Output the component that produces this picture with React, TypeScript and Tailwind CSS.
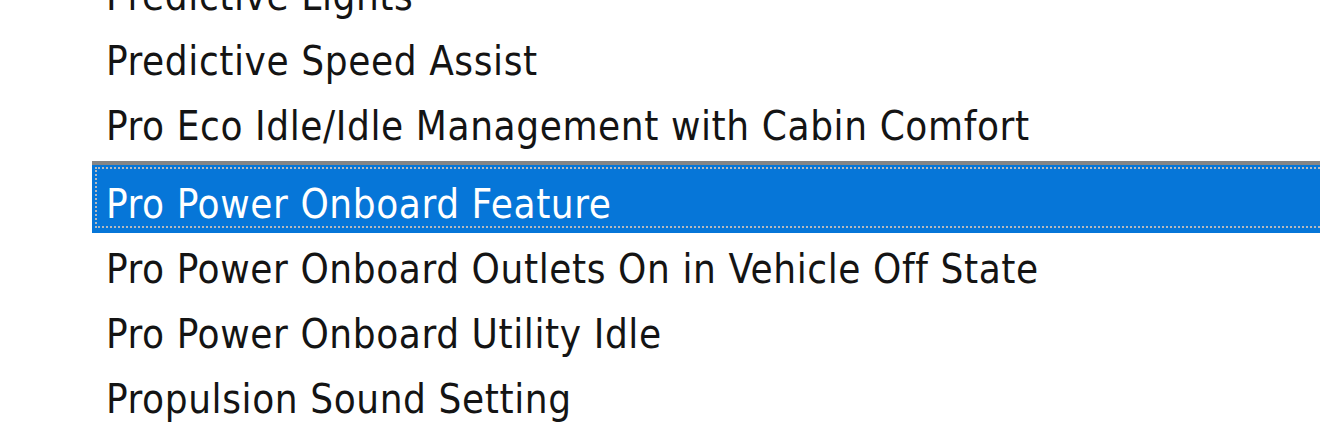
const items = [
  'Predictive Lights',
  'Predictive Speed Assist',
  'Pro Eco Idle/Idle Management with Cabin Comfort',
]

const after = [
  'Pro Power Onboard Outlets On in Vehicle Off State',
  'Pro Power Onboard Utility Idle',
  'Propulsion Sound Setting',
]

export default function App() {
  return (
    <div
      className="w-[1320px] h-[434px] overflow-hidden bg-white text-[40px] tracking-[0.6px] text-[#141414]"
      style={{ fontFamily: '"DejaVu Sans Condensed", "DejaVu Sans", Tahoma, sans-serif' }}
    >
      <div className="-mt-[36px] flex flex-col">
        {items.map((item) => (
          <div key={item} className="h-[65px] leading-[65px] pl-[106px] whitespace-nowrap">
            {item}
          </div>
        ))}

        {/* selected row */}
        <div className="mt-[2px] ml-[92px] h-[72px] border-t-4 border-[#858585] bg-[#0676d8]">
          <div className="mt-[2px] ml-[3px] h-[61px] border-2 border-r-0 border-dotted border-[#b4b9be]">
            <div className="pt-[14px] pl-[9px] leading-[43px] text-white whitespace-nowrap">
              Pro Power Onboard Feature
            </div>
          </div>
        </div>

        <div className="mt-[4px] flex flex-col">
          {after.map((item) => (
            <div key={item} className="h-[65px] leading-[65px] pl-[106px] whitespace-nowrap">
              {item}
            </div>
          ))}
        </div>
      </div>
    </div>
  )
}
